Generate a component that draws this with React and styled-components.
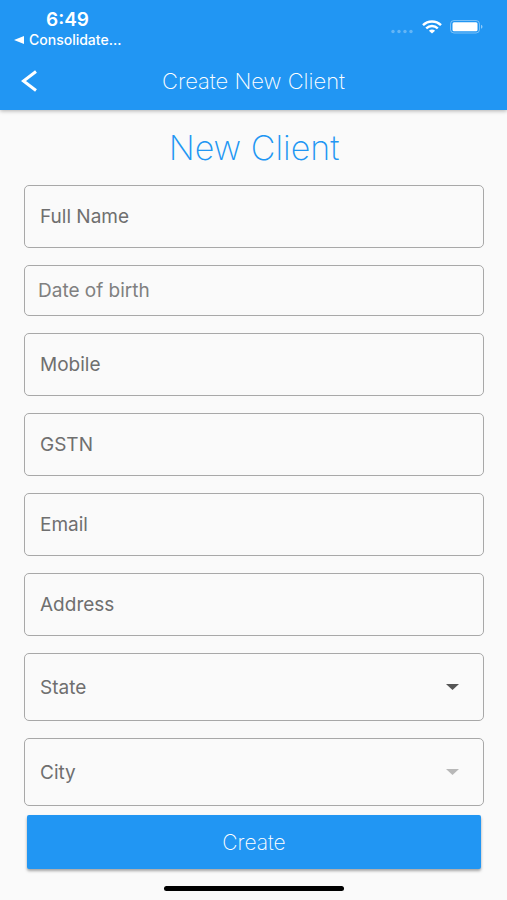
import React from "react";
import styled, { createGlobalStyle } from "styled-components";

const GlobalStyle = createGlobalStyle`
  * { box-sizing: border-box; }
  body {
    margin: 0;
    background: #fafafa;
    font-family: Inter, "Liberation Sans", sans-serif;
  }
  button, input, select { font-family: inherit; }
`;

const Screen = styled.div`
  min-height: 100vh;
  display: flex;
  flex-direction: column;
`;

const Header = styled.header`
  background: #2196f3;
  color: #fff;
  box-shadow: 0 1px 4px rgba(0, 0, 0, 0.3);
`;

const StatusBar = styled.div`
  display: flex;
  justify-content: space-between;
  height: 52px;
  padding: 10px 24px 0 14px;
`;

const StatusLeft = styled.div`
  display: flex;
  flex-direction: column;
`;

const Time = styled.span`
  padding-left: 32px;
  font-size: 19px;
  line-height: 20px;
  font-weight: 600;
`;

const ReturnLink = styled.a`
  display: flex;
  align-items: center;
  gap: 5px;
  color: inherit;
  font-size: 14px;
  line-height: 20px;
  font-weight: 500;
  text-decoration: none;
`;

const StatusIcons = styled.div`
  display: flex;
  align-items: center;
  gap: 8px;
  height: 34px;
`;

const NavBar = styled.div`
  display: grid;
  grid-template-columns: 44px 1fr 44px;
  align-items: center;
  height: 58px;
  padding: 0 8px;
`;

const BackButton = styled.button`
  display: flex;
  align-items: center;
  justify-content: center;
  height: 44px;
  padding: 0;
  border: 0;
  background: none;
  color: inherit;
`;

const NavTitle = styled.h1`
  margin: 0;
  text-align: center;
  font-size: 22px;
  line-height: 28px;
  font-weight: 200;
`;

const Form = styled.form`
  display: flex;
  flex-direction: column;
  padding: 18px 23px 0 24px;
`;

const FormTitle = styled.h2`
  margin: 0 0 17px;
  color: #2196f3;
  text-align: center;
  font-size: 34px;
  line-height: 40px;
  font-weight: 200;
`;

const Fields = styled.div`
  display: flex;
  flex-direction: column;
  gap: 17px;
`;

const TextField = styled.input`
  width: 100%;
  height: ${(p) => (p.$compact ? 51 : 63)}px;
  padding: 0 ${(p) => (p.$compact ? 13 : 15)}px;
  border: 1px solid #a8a8a8;
  border-radius: 5px;
  background: transparent;
  color: #333;
  font-size: 19px;
  &::placeholder {
    color: ${(p) => (p.$compact ? "#808080" : "#6f6f6f")};
    opacity: 1;
  }
`;

const SelectBox = styled.div`
  display: grid;
  align-items: center;
  height: 68px;
  border: 1px solid #a8a8a8;
  border-radius: 5px;
  color: ${(p) => (p.$muted ? "#b8b8b8" : "#555")};
  > * { grid-area: 1 / 1; }
  > svg {
    justify-self: end;
    margin-right: 24px;
    pointer-events: none;
  }
`;

const Select = styled.select`
  width: 100%;
  height: 100%;
  padding: 0 15px;
  border: 0;
  border-radius: 5px;
  background: transparent;
  color: #6f6f6f;
  font-size: 19px;
  appearance: none;
  opacity: 1;
`;

const SubmitButton = styled.button`
  height: 54px;
  margin: 9px 3px 0;
  border: 0;
  border-radius: 2px;
  background: #2196f3;
  color: #fff;
  box-shadow: 0 2px 3px rgba(0, 0, 0, 0.35);
  font-size: 21px;
  font-weight: 200;
`;

const HomeIndicator = styled.div`
  width: 36%;
  max-width: 180px;
  height: 5px;
  margin: auto auto 9px;
  border-radius: 3px;
  background: #000;
`;

const textFields = [
  { name: "name", label: "Full Name" },
  { name: "birth", label: "Date of birth", compact: true },
  { name: "mobile", label: "Mobile", type: "tel" },
  { name: "gstn", label: "GSTN" },
  { name: "email", label: "Email", type: "email" },
  { name: "address", label: "Address" },
];

function SignalDots() {
  return (
    <svg width="23" height="14" viewBox="0 0 23 14" fill="#fff" opacity="0.3" aria-hidden="true">
      <circle cx="2" cy="11.5" r="1.7" />
      <circle cx="8" cy="11.5" r="1.7" />
      <circle cx="14" cy="11.5" r="1.7" />
      <circle cx="20" cy="11.5" r="1.7" />
    </svg>
  );
}

function Wifi() {
  return (
    <svg width="20" height="14" viewBox="0 0 20 14" fill="none" stroke="#fff" strokeWidth="2.4" aria-hidden="true">
      <path d="M1 5.2C6 .2 14 .2 19 5.2" />
      <path d="M4.2 8.4c3.4-3.2 8.2-3.2 11.6 0" />
      <path d="M6.9 10.8C8.7 9.2 11.3 9.2 13.1 10.8L10 13.6Z" fill="#fff" stroke="none" />
    </svg>
  );
}

function Battery() {
  return (
    <svg width="33" height="14" viewBox="0 0 33 14" aria-hidden="true">
      <rect x=".5" y=".5" width="29" height="12.5" rx="3.5" fill="none" stroke="#fff" opacity=".4" />
      <rect x="2.5" y="2.3" width="25" height="9" rx="1.5" fill="#fff" />
      <path d="M31 4.8c2 .8 2 3.2 0 4Z" fill="#fff" opacity=".5" />
    </svg>
  );
}

function Dropdown({ name, label, disabled }) {
  return (
    <SelectBox $muted={disabled}>
      <Select name={name} aria-label={label} disabled={disabled} defaultValue="">
        <option value="">{label}</option>
      </Select>
      <svg width="13" height="6" viewBox="0 0 13 6" fill="currentColor" aria-hidden="true">
        <path d="M0 0H13L6.5 6Z" />
      </svg>
    </SelectBox>
  );
}

export default function App() {
  return (
    <Screen>
      <GlobalStyle />
      <Header>
        <StatusBar>
          <StatusLeft>
            <Time>6:49</Time>
            <ReturnLink href="#">
              <svg width="10" height="8" viewBox="0 0 10 8" fill="currentColor" aria-hidden="true">
                <path d="M0 4L10 0V8Z" />
              </svg>
              Consolidate...
            </ReturnLink>
          </StatusLeft>
          <StatusIcons>
            <SignalDots />
            <Wifi />
            <Battery />
          </StatusIcons>
        </StatusBar>
        <NavBar>
          <BackButton type="button" aria-label="Back">
            <svg width="18" height="22" viewBox="0 0 18 22" fill="none" stroke="currentColor" strokeWidth="3" aria-hidden="true">
              <path d="M15 1.5L2.5 11L15 20.5" />
            </svg>
          </BackButton>
          <NavTitle>Create New Client</NavTitle>
        </NavBar>
      </Header>
      <Form onSubmit={(e) => e.preventDefault()}>
        <FormTitle>New Client</FormTitle>
        <Fields>
          {textFields.map((f) => (
            <TextField
              key={f.name}
              name={f.name}
              type={f.type || "text"}
              placeholder={f.label}
              aria-label={f.label}
              $compact={f.compact}
            />
          ))}
          <Dropdown name="state" label="State" />
          <Dropdown name="city" label="City" disabled />
        </Fields>
        <SubmitButton type="submit">Create</SubmitButton>
      </Form>
      <HomeIndicator />
    </Screen>
  );
}
